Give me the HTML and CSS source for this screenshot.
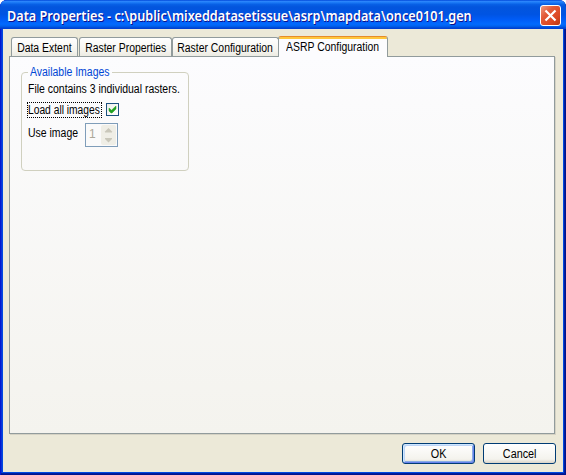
FILE: index.html
```
<!DOCTYPE html>
<html lang="en">
<head>
<meta charset="utf-8">
<title>Data Properties</title>
<link rel="stylesheet" href="styles.css">
</head>
<body>
<div class="window">
  <header class="titlebar">
    <h1 class="title">Data Properties - c:\public\mixeddatasetissue\asrp\mapdata\once0101.gen</h1>
    <button class="close" aria-label="Close"><svg width="19" height="19" viewBox="0 0 19 19"><path d="M4.500 4.500l10 10M14.500 4.500l-10 10" stroke="#fff" stroke-width="2.200"/></svg></button>
  </header>
  <main class="client">
    <nav class="tabs">
      <button class="tab tab-extent"><span class="txt">Data Extent</span></button>
      <button class="tab tab-raster"><span class="txt">Raster Properties</span></button>
      <button class="tab tab-config"><span class="txt">Raster Configuration</span></button>
      <button class="tab tab-active"><span class="txt">ASRP Configuration</span></button>
    </nav>
    <section class="panel">
      <fieldset class="group">
        <legend><span class="txt">Available Images</span></legend>
        <p class="info"><span class="txt">File contains 3 individual rasters.</span></p>
        <div class="row load-row">
          <span class="focus-label"><span class="txt">Load all images</span></span>
          <span class="checkbox"><svg width="11" height="11" viewBox="0 0 11 11"><path d="M2 4v3l2 2h1l4-4V2L4.500 6.200z" fill="#21a121" stroke="#21a121" stroke-width=".5"/></svg></span>
        </div>
        <div class="row use-row">
          <span class="use-label"><span class="txt">Use image</span></span>
          <span class="spinner"><span class="value">1</span>
            <span class="arrows">
              <svg width="15" height="10" viewBox="0 0 15 10"><path d="M4 7.500h7v-1L7.500 3 4 6.500z" fill="#c9c7ba"/></svg>
              <svg width="15" height="10" viewBox="0 0 15 10"><path d="M4 3h7v1L7.500 7.500 4 4z" fill="#c9c7ba"/></svg>
            </span>
          </span>
        </div>
      </fieldset>
    </section>
    <footer class="actions">
      <button class="btn btn-default"><span class="txt">OK</span></button>
      <button class="btn"><span class="txt">Cancel</span></button>
    </footer>
  </main>
</div>
</body>
</html>
```
FILE: styles.css
```
* { box-sizing: border-box; }
body { margin: 0; background: #fff; font: 12px/13px "Liberation Sans", Arial, sans-serif; color: #000; }
button { font: inherit; color: inherit; padding: 0; margin: 0; white-space: nowrap; display: flex; align-items: center; justify-content: center; }
svg { display: block; }
.txt { display: inline-block; white-space: nowrap; transform: scaleX(.872); transform-origin: left; }
button .txt { transform-origin: center; }
.window {
  width: 566px; height: 475px; padding: 0 3px 3px; overflow: hidden;
  border-radius: 7px 7px 0 0; background: #0049e0;
  box-shadow: inset 1px 0 #0019cf, inset -1px -1px #00138c, inset -2px -2px #001ea0, inset 2px 0 #0831d9;
}
.titlebar {
  height: 29px; margin: 0 -3px; padding: 2px 5px 0 7px; display: flex; align-items: center; justify-content: space-between;
  background: linear-gradient(#0046d8 0, #2b85fb 5%, #1a78f5 9%, #0860e6 15%, #0355dd 24%, #0054e3 50%, #005bf5 66%, #026afe 83%, #0062ef 90%, #0043cf 97%, #003dd7 100%);
}
.title { margin: 0; font: 600 14px/20px "Noto Sans", sans-serif; color: #fff; text-shadow: 1px 1px #0f1089; white-space: nowrap; transform: scaleX(.906); transform-origin: left; }
.close { width: 21px; height: 21px; flex: none; border: 1px solid #fff; border-radius: 3px; background: linear-gradient(135deg, #ef9a80, #e25a38 35%, #dc4822 70%, #b93711); }
.client { height: 443px; padding: 7px 8px 8px 6px; background: #ece9d8; }
.tabs { display: flex; align-items: flex-end; height: 21px; padding-left: 2px; position: relative; z-index: 1; }
.tab { height: 19px; margin-bottom: 1px; padding-top: 2px; border: 1px solid #919b9c; border-bottom: 0; border-radius: 3px 3px 0 0; background: linear-gradient(#fff, #f5f4ee 70%, #ecebe3); }
.tab-extent { width: 67px; }
.tab-raster { width: 93px; margin-left: 1px; }
.tab-config { width: 107px; }
.tab-active { width: 110px; height: 21px; margin-left: -1px; margin-bottom: 0; padding-top: 0; border-top-color: #e68b2c; background: linear-gradient(#ffc73c 2px, #fcfcfe 2px) padding-box; }
.tab .txt { transform: scaleX(.868); }
.panel { height: 378px; margin-top: -1px; padding: 9px 11px; border: 1px solid #919b9c; background: linear-gradient(#fcfcfe, #f4f3ee); box-shadow: 1px 1px #d5d2c4; }
.group { width: 168px; height: 105px; margin: 0; padding: 0 6px; border: 1px solid #d0d0bf; border-radius: 4px; min-width: 0; }
legend { width: 84px; padding: 0 2px; color: #0046d5; }
.info { width: 150px; margin: 4px 0 6px; height: 13px; }
.row { display: flex; white-space: nowrap; }
.focus-label { width: 75px; height: 16px; margin-left: -1px; border: 1px dotted #000; line-height: 14px; }
.focus-label .txt { transform: scaleX(.855); }
.checkbox { width: 13px; height: 13px; flex: none; margin: 1px 0 0 4px; border: 1px solid #1c5180; background: linear-gradient(135deg, #eeeeea, #fff); }
.use-row { margin-top: 5px; }
.use-label { width: 57px; padding-top: 4px; }
.spinner { width: 33px; height: 24px; display: flex; justify-content: space-between; border: 1px solid #7f9db9; padding: 1px; background: #fafafa; color: #aca899; }
.value { padding: 3px 0 0 2px; font-size: 12px; }
.arrows { width: 15px; height: 20px; border-radius: 2px; background: #efeee6; }
.actions { display: flex; justify-content: flex-end; gap: 8px; margin-top: 9px; margin-right: -1px; }
.btn { width: 73px; height: 21px; padding-top: 2px; border: 1px solid #003c74; border-radius: 3px; background: linear-gradient(#fff, #f4f3ed 80%, #d9d3c8); }
.btn .txt { transform: scaleX(.9); }
.btn-default { box-shadow: inset 1px 1px #cee7ff, inset -1px -1px #6982ee, inset 2px 2px #bcd4f6, inset -2px -2px #89ade4; }
```
